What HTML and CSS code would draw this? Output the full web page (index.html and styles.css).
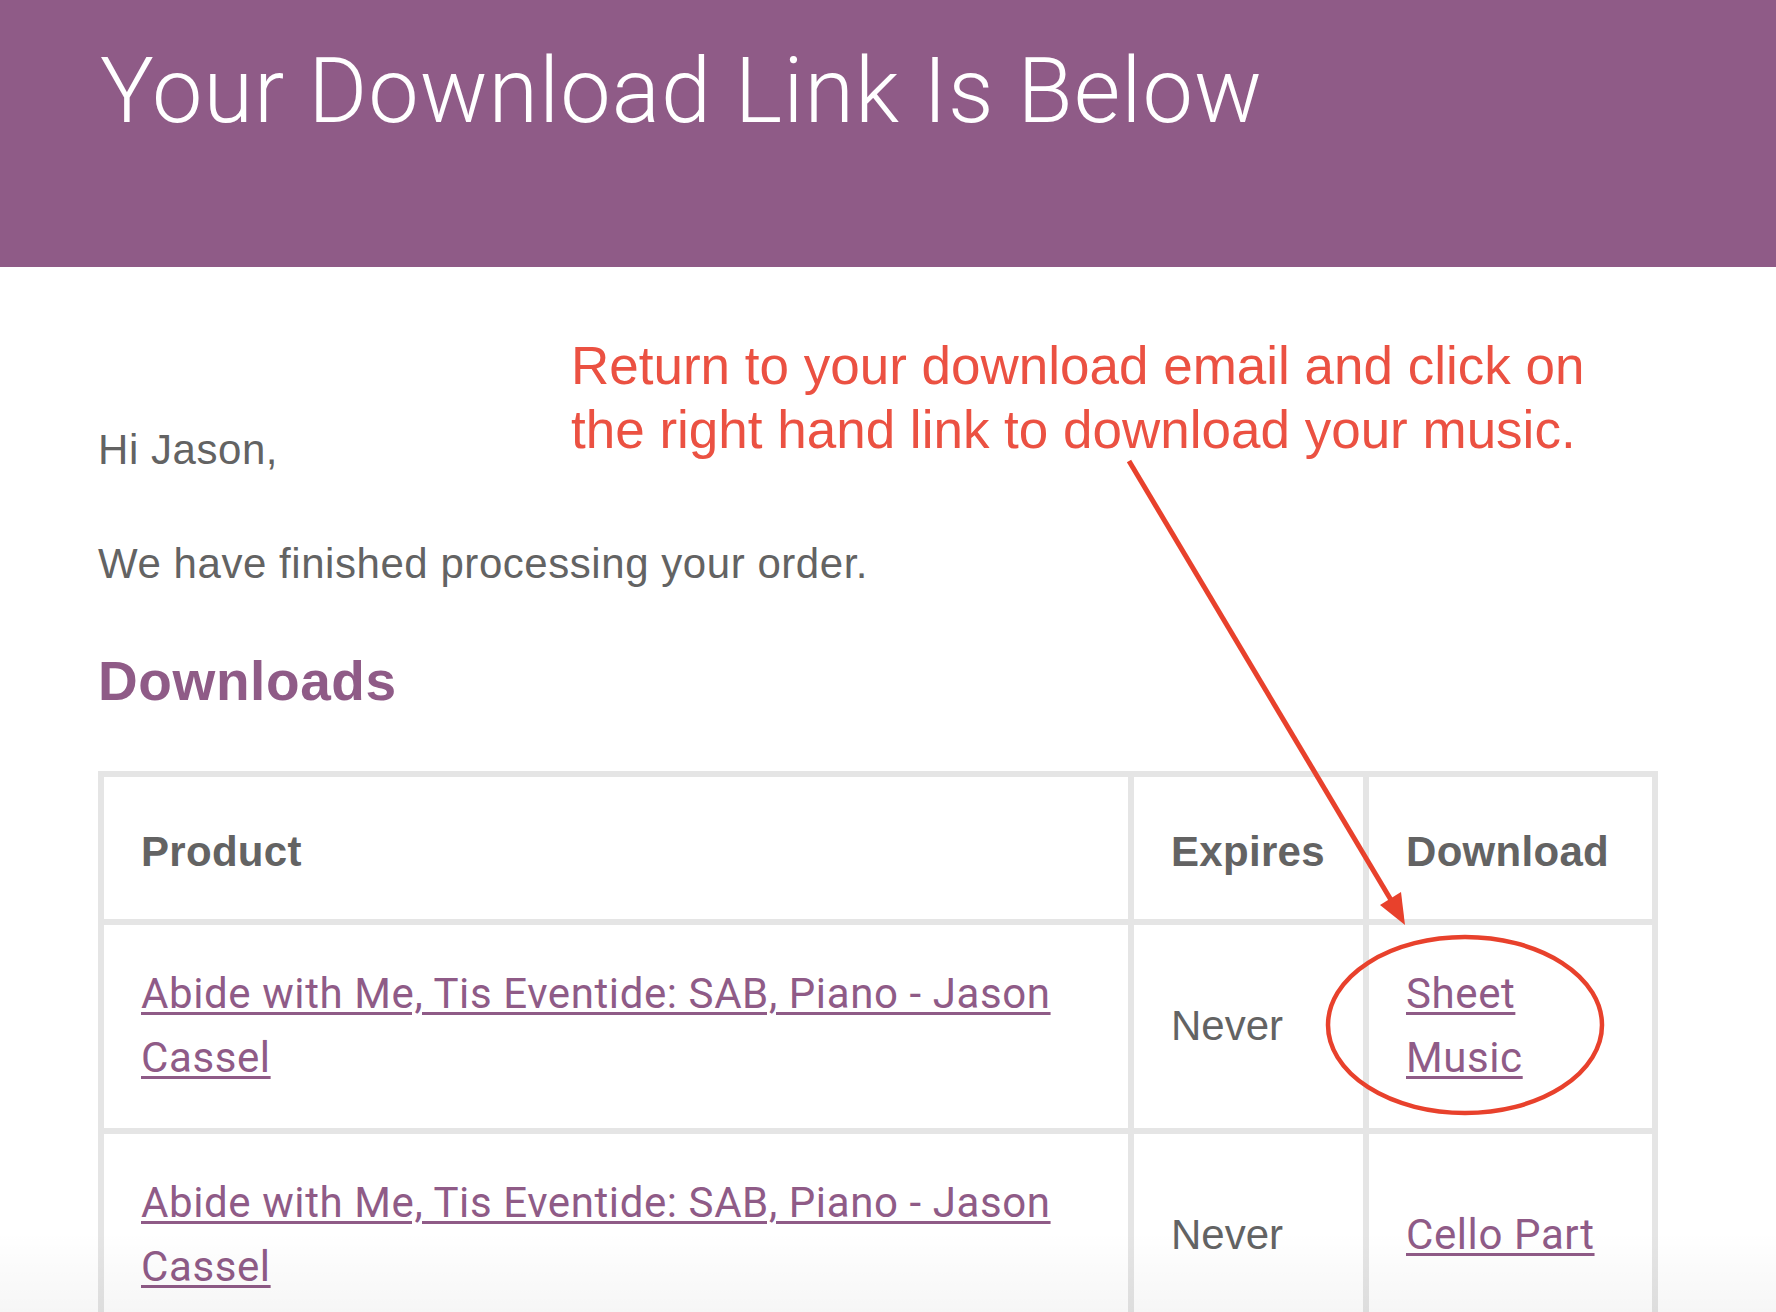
FILE: index.html
```html
<!DOCTYPE html>
<html lang="en">
<head>
<meta charset="utf-8">
<title>Your Download Link Is Below</title>
<link rel="stylesheet" href="styles.css">
</head>
<body>
<div class="page">
  <header class="banner">
    <h1 class="banner-title">Your Download Link Is Below</h1>
  </header>
  <main class="content">
    <p class="para greet">Hi Jason,</p>
    <p class="para">We have finished processing your order.</p>
    <h2 class="section-title">Downloads</h2>
    <table class="dl">
      <colgroup><col class="c1"><col class="c2"><col class="c3"></colgroup>
      <thead>
        <tr><th>Product</th><th>Expires</th><th>Download</th></tr>
      </thead>
      <tbody>
        <tr>
          <td><a class="link" href="#">Abide with Me, Tis Eventide: SAB, Piano - Jason Cassel</a></td>
          <td>Never</td>
          <td><a class="link" href="#">Sheet Music</a></td>
        </tr>
        <tr>
          <td><a class="link" href="#">Abide with Me, Tis Eventide: SAB, Piano - Jason Cassel</a></td>
          <td>Never</td>
          <td><a class="link" href="#">Cello Part</a></td>
        </tr>
      </tbody>
    </table>
  </main>
  <div class="note">Return to your download email and click on<br>the right hand link to download your music.</div>
  <svg class="marks" width="1776" height="1312" viewBox="0 0 1776 1312" aria-hidden="true">
    <line x1="1129" y1="461" x2="1391" y2="900" stroke="#e8412c" stroke-width="5" stroke-linecap="butt"/>
    <polygon points="1405,925 1380,905 1401,892" fill="#e8412c"/>
    <ellipse cx="1465" cy="1025" rx="137" ry="88" fill="none" stroke="#e8412c" stroke-width="4.5"/>
  </svg>
  <div class="fade"></div>
</div>
</body>
</html>
```
FILE: styles.css
```css
html, body {
  margin: 0;
  padding: 0;
  overflow: hidden;
  background: #ffffff;
}
.page {
  position: relative;
  width: 1776px;
  height: 1312px;
  overflow: hidden;
  font-family: "Liberation Sans", Arial, Helvetica, sans-serif;
  color: #636363;
}
.banner {
  background: #8f5b87;
  height: 267px;
  box-sizing: border-box;
  padding: 24px 0 0 100px;
}
.banner-title {
  margin: 0;
  font-family: Roboto, "Liberation Sans", Arial, sans-serif;
  font-weight: 300;
  font-size: 90px;
  line-height: 135px;
  color: #ffffff;
  letter-spacing: 1px;
}
.content {
  padding: 151px 0 0 98px;
}
.para {
  margin: 0 0 51px;
  font-size: 42px;
  line-height: 63px;
  letter-spacing: 0.55px;
}
.section-title {
  margin: 3px 0 55px;
  color: #8f5b87;
  font-size: 55px;
  line-height: 70px;
  font-weight: 700;
  letter-spacing: 0.6px;
}
.dl {
  border: 3px solid #e5e5e5;
  border-collapse: separate;
  border-spacing: 0;
  width: 1560px;
  table-layout: fixed;
  font-size: 42px;
  line-height: 64px;
  color: #636363;
}
.c1 { width: 1030px; }
.c2 { width: 235px; }
.c3 { width: 289px; }
.dl th,
.dl td {
  border: 3px solid #e5e5e5;
  text-align: left;
  vertical-align: middle;
}
.dl th {
  padding: 43px 36px 35px 37px;
  font-weight: 700;
  letter-spacing: 0.3px;
}
.dl td {
  padding: 37px 36px 38px 37px;
}
.link {
  font-family: Roboto, "Liberation Sans", Arial, sans-serif;
  color: #8f5b87;
  text-decoration: underline;
  text-decoration-thickness: 3px;
  text-underline-offset: 4px;
  letter-spacing: 0.6px;
}
.note {
  position: absolute;
  left: 571px;
  top: 334px;
  font-size: 53px;
  line-height: 64px;
  color: #eb5142;
  white-space: nowrap;
}
.marks {
  position: absolute;
  left: 0;
  top: 0;
  pointer-events: none;
}
.fade {
  position: absolute;
  left: 0;
  right: 0;
  bottom: 0;
  height: 80px;
  background: linear-gradient(to bottom, rgba(0,0,0,0), rgba(0,0,0,0.035));
  pointer-events: none;
}
```
